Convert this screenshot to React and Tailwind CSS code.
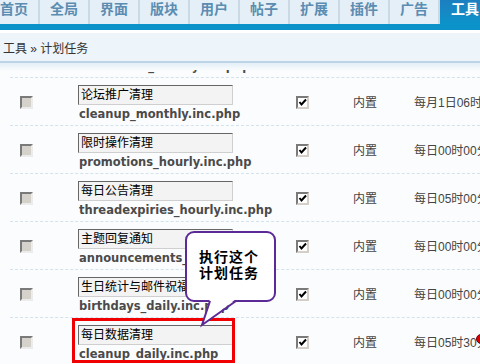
import React from "react";

// Scheduled tasks list (计划任务) with a callout annotation over it.

const TABS = ["首页", "全局", "界面", "版块", "用户", "帖子", "扩展", "插件", "广告"];

const ROWS = [
  { name: "论坛推广清理", file: "cleanup_monthly.inc.php", time: "每月1日06时00分" },
  { name: "限时操作清理", file: "promotions_hourly.inc.php", time: "每日00时00分" },
  { name: "每日公告清理", file: "threadexpiries_hourly.inc.php", time: "每日05时00分" },
  { name: "主题回复通知", file: "announcements_daily.inc.php", time: "每日00时00分" },
  { name: "生日统计与邮件祝福", file: "birthdays_daily.inc.php", time: "每日00时00分" },
  { name: "每日数据清理", file: "cleanup_daily.inc.php", time: "每日05时30分" },
];

function GrayBox() {
  return (
    <div className="w-[13px] h-[13px] shrink-0 border-2 border-t-[#7a7a7a] border-l-[#7a7a7a] border-r-[#ececec] border-b-[#ececec] bg-[#d5d2cc]" />
  );
}

function CheckedBox() {
  return (
    <div className="w-[13px] h-[13px] shrink-0 border-2 border-t-[#7a7a7a] border-l-[#7a7a7a] border-r-[#d4d0c8] border-b-[#d4d0c8] bg-white">
      <svg width="9" height="9" viewBox="0 0 9 9" className="block">
        <polyline points="1.5,4 3.5,6.5 8,1.5" fill="none" stroke="#000" strokeWidth="2" />
      </svg>
    </div>
  );
}

function TaskRow({ row }) {
  return (
    <div className="flex items-start h-[48px] ml-[10px] border-t border-dashed border-[#d3e2ee] text-[12px]">
      <div className="ml-[10px] mt-[18px]">
        <GrayBox />
      </div>
      <div className="ml-[45px] w-[218px] shrink-0">
        <div className="mt-[7px] w-[155px] h-[20px] border border-t-[#666] border-l-[#666] border-r-[#cfcfcf] border-b-[#cfcfcf] bg-[#f3f3f3] pl-[2px] leading-[18px] text-black whitespace-nowrap overflow-hidden">
          {row.name}
        </div>
        <div className="mt-[2px] pl-[1px] leading-[14px] font-['DejaVu_Sans',sans-serif] font-bold text-[11.5px] text-[#4a4a4a] whitespace-nowrap">
          {row.file}
        </div>
      </div>
      <div className="mt-[18px]">
        <CheckedBox />
      </div>
      <div className="ml-[44px] mt-[18px] leading-[14px] text-[#444] whitespace-nowrap">内置</div>
      <div className="ml-[37px] mt-[18px] leading-[14px] text-[#444] whitespace-nowrap">{row.time}</div>
    </div>
  );
}

export default function App() {
  return (
    <div className="relative w-[480px] h-[364px] overflow-hidden bg-[#fbfcfd] font-['Liberation_Sans','Noto_Sans_CJK_SC',sans-serif]">
      {/* top tabs */}
      <div className="flex h-[24px] bg-[#e5eff7] ml-[-10px]">
        {TABS.map(t => (
          <div
            key={t}
            className="w-[50px] shrink-0 h-full text-center border-r-2 border-[#cad9e4] text-[14px] font-bold leading-[18px] text-[#5b8cb1]"
          >
            {t}
          </div>
        ))}
        <div className="w-[50px] shrink-0 h-full text-center text-[14px] font-bold leading-[18px] text-white bg-gradient-to-b from-[#1c7fc0] to-[#0b93c9]">
          工具
        </div>
      </div>
      <div className="h-[6px] bg-[#0b93c9]" />
      <div className="h-[3px] bg-white" />

      {/* breadcrumb */}
      <div className="h-[30px] bg-[#edf4fa] pl-[3px] pt-[3px] flex items-center text-[12px] text-[#333] border-b-2 border-[#bcd4e6]">
        工具 » 计划任务
      </div>
      <div className="h-[7px] bg-gradient-to-b from-[#e4eff7] to-[#f8fbfd]" />

      {/* list */}
      <div className="h-[7px] overflow-hidden">
        <div className="mt-[-11px] ml-[79px] leading-[14px] font-['DejaVu_Sans',sans-serif] font-bold text-[11.5px] text-[#4a4a4a] whitespace-nowrap">
          onlinetime_weekly.inc.php
        </div>
      </div>
      {ROWS.map(r => (
        <TaskRow key={r.file} row={r} />
      ))}

      {/* annotation: red frame */}
      <div className="absolute left-[72px] top-[318px] w-[163px] h-[45px] border-[3px] border-[#f00000]" />

      {/* annotation: callout */}
      <div className="absolute left-[184px] top-[230px] w-[96px] h-[100px]">
        <svg width="96" height="100" viewBox="0 0 96 100" className="block">
          <rect x="2" y="2" width="89" height="69" rx="8" fill="#fff" stroke="#5b2a96" strokeWidth="2" />
          <polygon points="26,69 18,95 52,69" fill="#fff" />
          <polyline points="26,71 18,95 52,71" fill="none" stroke="#5b2a96" strokeWidth="2" />
        </svg>
        <div className="absolute left-[15px] top-[19px] text-[14px] font-bold leading-[16px] tracking-[1px] text-black">
          执行这个
          <br />
          计划任务
        </div>
      </div>

      {/* red dot at right edge */}
      <div className="absolute left-[476px] top-[334px] w-[10px] h-[10px] rounded-full bg-[#d80000] border border-[#700]" />
    </div>
  );
}
